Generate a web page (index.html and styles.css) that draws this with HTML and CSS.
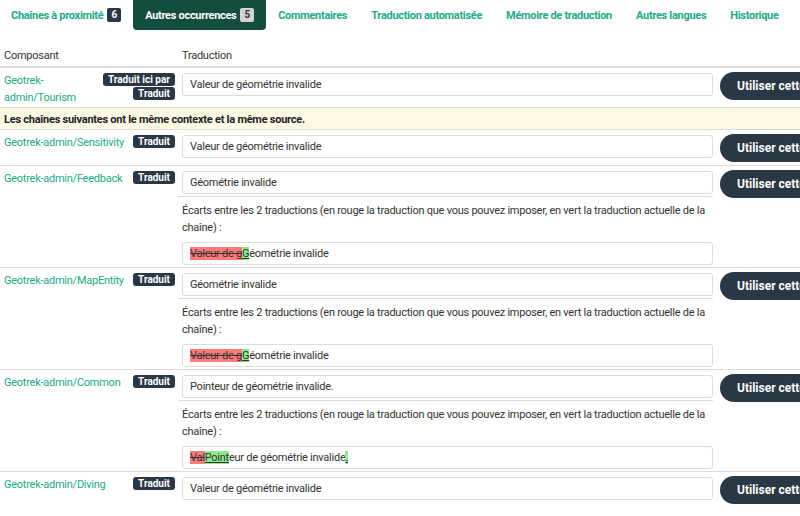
FILE: index.html
```html
<!DOCTYPE html>
<html lang="fr">
<head>
<meta charset="utf-8">
<link rel="stylesheet" href="styles.css">
</head>
<body>
<div class="page">
  <nav class="tabs">
    <a class="tab">Chaînes à proximité <span class="count dark">6</span></a>
    <a class="tab active">Autres occurrences <span class="count light">5</span></a>
    <a class="tab">Commentaires</a>
    <a class="tab">Traduction automatisée</a>
    <a class="tab">Mémoire de traduction</a>
    <a class="tab">Autres langues</a>
    <a class="tab">Historique</a>
  </nav>

  <div class="table">
    <div class="row head">
      <div class="c1">Composant</div>
      <div class="c2">Traduction</div>
      <div class="c3"></div>
    </div>

    <div class="row">
      <div class="c1">
        <a class="link">Geotrek-admin/Tourism</a>
        <span class="badges"><span class="badge">Traduit ici par</span><span class="badge">Traduit</span></span>
      </div>
      <div class="c2"><div class="field">Valeur de géométrie invalide</div></div>
      <div class="c3"><button class="btn">Utiliser cette traduction</button></div>
    </div>

    <div class="notice">Les chaînes suivantes ont le même contexte et la même source.</div>

    <div class="row">
      <div class="c1"><a class="link">Geotrek-admin/Sensitivity</a><span class="badges"><span class="badge">Traduit</span></span></div>
      <div class="c2"><div class="field">Valeur de géométrie invalide</div></div>
      <div class="c3"><button class="btn">Utiliser cette traduction</button></div>
    </div>

    <div class="row">
      <div class="c1"><a class="link">Geotrek-admin/Feedback</a><span class="badges"><span class="badge">Traduit</span></span></div>
      <div class="c2">
        <div class="field">Géométrie invalide</div>
        <div class="diffblock">
          <p>Écarts entre les 2 traductions (en rouge la traduction que vous pouvez imposer, en vert la traduction actuelle de la chaîne) :</p>
          <div class="field diff"><del>Valeur de g</del><ins>G</ins>éométrie invalide</div>
        </div>
      </div>
      <div class="c3"><button class="btn">Utiliser cette traduction</button></div>
    </div>

    <div class="row">
      <div class="c1"><a class="link">Geotrek-admin/MapEntity</a><span class="badges"><span class="badge">Traduit</span></span></div>
      <div class="c2">
        <div class="field">Géométrie invalide</div>
        <div class="diffblock">
          <p>Écarts entre les 2 traductions (en rouge la traduction que vous pouvez imposer, en vert la traduction actuelle de la chaîne) :</p>
          <div class="field diff"><del>Valeur de g</del><ins>G</ins>éométrie invalide</div>
        </div>
      </div>
      <div class="c3"><button class="btn">Utiliser cette traduction</button></div>
    </div>

    <div class="row">
      <div class="c1"><a class="link">Geotrek-admin/Common</a><span class="badges"><span class="badge">Traduit</span></span></div>
      <div class="c2">
        <div class="field">Pointeur de géométrie invalide.</div>
        <div class="diffblock">
          <p>Écarts entre les 2 traductions (en rouge la traduction que vous pouvez imposer, en vert la traduction actuelle de la chaîne) :</p>
          <div class="field diff"><del>Val</del><ins>Point</ins>eur de géométrie invalide<ins>.</ins></div>
        </div>
      </div>
      <div class="c3"><button class="btn">Utiliser cette traduction</button></div>
    </div>

    <div class="row">
      <div class="c1"><a class="link">Geotrek-admin/Diving</a><span class="badges"><span class="badge">Traduit</span></span></div>
      <div class="c2"><div class="field">Valeur de géométrie invalide</div></div>
      <div class="c3"><button class="btn">Utiliser cette traduction</button></div>
    </div>
  </div>
</div>
</body>
</html>
```

FILE: styles.css
```css
html, body {
  margin: 0;
  padding: 0;
  overflow: hidden;
  background: #fff;
}
body {
  font-family: Roboto, "Liberation Sans", sans-serif;
  font-size: 11px;
  line-height: 17px;
  letter-spacing: -0.25px;
  color: #333;
}
.page {
  width: 800px;
  overflow: hidden;
}
.tabs {
  display: flex;
  height: 30px;
  margin-left: -1px;
  margin-bottom: 17px;
}
.tab {
  display: flex;
  align-items: center;
  gap: 4px;
  padding: 0 12px;
  font-weight: bold;
  color: #22a98a;
  white-space: nowrap;
  border-radius: 0 0 4px 4px;
  letter-spacing: -0.3px;
}
.tab.active {
  background: #144d3f;
  color: #fff;
}
.count {
  font-size: 10px;
  line-height: 14px;
  padding: 0 4px;
  border-radius: 2px;
  letter-spacing: 0;
}
.count.dark { background: #2a3744; color: #fff; }
.count.light { background: #d4d4d4; color: #333; }

.table {
  width: 980px;
}
.row {
  display: grid;
  grid-template-columns: 178px 539px 240px;
  border-top: 1px solid #dcdcdc;
}
.row.head {
  border-top: none;
  border-bottom: 1px solid #dcdcdc;
}
.row.head .c1, .row.head .c2 {
  padding-top: 0;
  padding-bottom: 2px;
}
.c1 {
  display: flex;
  justify-content: space-between;
  align-items: flex-start;
  gap: 4px;
  padding: 4px 3px 1px 4px;
}
.c2 {
  padding: 4px 4px 2px;
}
.c3 {
  padding: 4px 0 3px 3px;
}
.link {
  color: #22a98a;
  line-height: 17px;
}
.badges {
  display: flex;
  flex-direction: column;
  align-items: flex-end;
  gap: 1px;
  flex-shrink: 0;
  margin-top: 1px;
}
.badge {
  background: #2a3744;
  color: #fff;
  font-size: 10px;
  font-weight: bold;
  line-height: 13px;
  padding: 0 5px;
  border-radius: 3px;
  white-space: nowrap;
  letter-spacing: 0;
}
.field {
  height: 23px;
  box-sizing: border-box;
  border: 1px solid #dcdcdc;
  border-radius: 3px;
  padding: 2px 7px;
  line-height: 17px;
  margin-top: 1px;
}
.field.diff {
  margin-top: 0;
}
.btn {
  height: 28px;
  padding: 0 17px;
  border: none;
  border-radius: 14px;
  background: #2a3744;
  color: #fff;
  font-family: inherit;
  font-size: 12px;
  font-weight: bold;
  white-space: nowrap;
}
.notice {
  border-top: 1px solid #dcdcdc;
  background: #fcf8e3;
  font-weight: bold;
  color: #222;
  padding: 3px 4px 1px;
}
.diffblock {
  margin: 2px 0 0 -4px;
  padding: 5px 0 0 4px;
  border-top: 1px solid #dcdcdc;
}
.diffblock p {
  margin: 0 0 6px;
}
del {
  background: #ff7b7b;
  text-decoration: line-through;
}
ins {
  background: #8ee88e;
  text-decoration: underline;
}
```
